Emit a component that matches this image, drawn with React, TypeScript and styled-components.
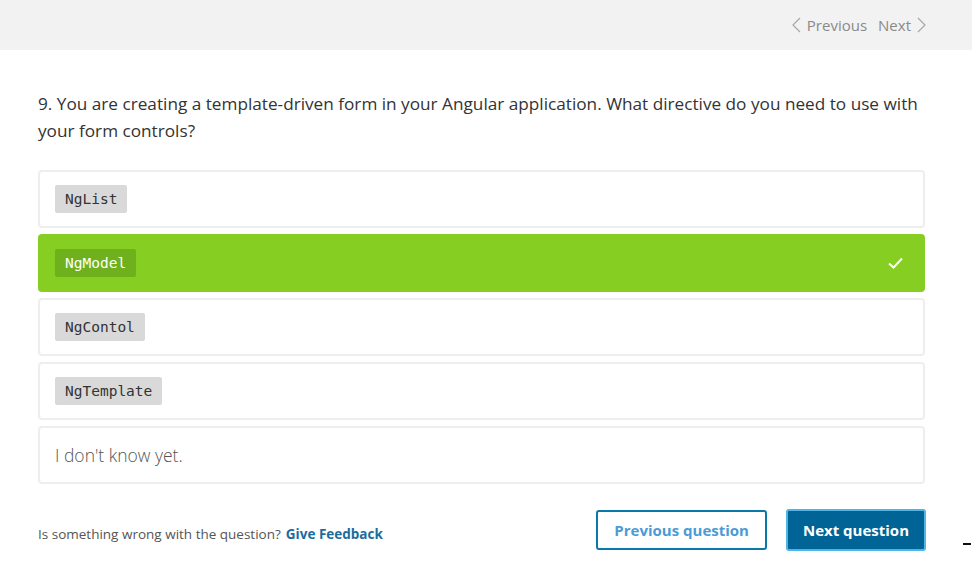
import React, { FC } from 'react';
import styled, { createGlobalStyle } from 'styled-components';

type OptionType = {
  id: number;
  label: string;
  code?: boolean;
  selected?: boolean;
};

const options: OptionType[] = [
  { id: 1, label: 'NgList', code: true },
  { id: 2, label: 'NgModel', code: true, selected: true },
  { id: 3, label: 'NgContol', code: true },
  { id: 4, label: 'NgTemplate', code: true },
  { id: 5, label: "I don't know yet." },
];

const GlobalStyle = createGlobalStyle`
  body {
    margin: 0;
    background: #ffffff;
    font-family: 'Open Sans', Lato, sans-serif;
  }
`;

const Page = styled.div`
  position: relative;
  width: 972px;
  height: 569px;
  overflow: hidden;
`;

const TopBar = styled.header`
  height: 50px;
  background: #f2f2f2;
  display: flex;
  align-items: center;
  justify-content: flex-end;
  padding-right: 46px;
  gap: 11px;
`;

const NavLink = styled.span`
  display: flex;
  align-items: center;
  gap: 6px;
  color: #8a8a8a;
  font-size: 15px;
  cursor: pointer;
  svg {
    display: block;
  }
`;

const Main = styled.main`
  padding: 40px 47px 0 38px;
`;

const Question = styled.p`
  margin: 0 0 26px;
  font-size: 17.2px;
  line-height: 27px;
  color: #333333;
`;

const OptionList = styled.ul`
  list-style: none;
  margin: 0;
  padding: 0;
  display: flex;
  flex-direction: column;
  gap: 6px;
`;

const OptionRow = styled.li<{ selected?: boolean }>`
  height: 58px;
  box-sizing: border-box;
  border: 2px solid ${(p) => (p.selected ? '#86ce22' : '#eeeeee')};
  border-radius: 4px;
  background: ${(p) => (p.selected ? '#86ce22' : '#ffffff')};
  display: flex;
  align-items: center;
  justify-content: space-between;
  padding: 0 20px 0 15px;
`;

const Code = styled.code<{ selected?: boolean }>`
  font-family: 'DejaVu Sans Mono', 'Liberation Mono', monospace;
  font-size: 14.5px;
  line-height: 28px;
  padding: 0 10px;
  border-radius: 2px;
  background: ${(p) => (p.selected ? '#6eb11d' : '#d9d9d9')};
  color: ${(p) => (p.selected ? '#ffffff' : '#333333')};
`;

const PlainText = styled.span`
  font-size: 17.5px;
  color: #555555;
  font-weight: 300;
`;

const Footer = styled.footer`
  display: flex;
  align-items: center;
  justify-content: space-between;
  margin-top: 25px;
`;

const Feedback = styled.p`
  margin: 8px 0 0;
  font-size: 13.5px;
  color: #555555;
  a {
    margin-left: 5px;
    color: #1a6c9e;
    font-weight: 700;
    text-decoration: none;
  }
`;

const Buttons = styled.div`
  display: flex;
  align-items: center;
  gap: 19px;
  margin-right: -1px;
`;

const Button = styled.button<{ primary?: boolean }>`
  height: ${(p) => (p.primary ? '42px' : '40px')};
  padding: 0 ${(p) => (p.primary ? '15px' : '16px')};
  box-sizing: border-box;
  border-radius: 3px;
  border: 2px solid ${(p) => (p.primary ? '#4fb4e6' : '#0b78ac')};
  background: ${(p) => (p.primary ? '#006496' : '#ffffff')};
  color: ${(p) => (p.primary ? '#ffffff' : '#4a9bd6')};
  font-family: 'Open Sans', Lato, sans-serif;
  font-weight: 700;
  font-size: 15px;
  cursor: pointer;
`;

const EdgeMark = styled.span`
  position: absolute;
  right: 1px;
  top: 543px;
  width: 8px;
  height: 2px;
  background: #111111;
`;

const Chevron: FC<{ dir: 'left' | 'right' }> = ({ dir }) => (
  <svg width="9" height="16" viewBox="0 0 9 16" fill="none" stroke="#a8a8a8" strokeWidth="1.2">
    {dir === 'left' ? <path d="M8 1 1 8l7 7" /> : <path d="M1 1l7 7-7 7" />}
  </svg>
);

const Check = () => (
  <svg width="15" height="12" viewBox="0 0 15 12" fill="none" stroke="#ffffff" strokeWidth="2">
    <path d="M1 6.5 5.5 10.5 14 1.5" />
  </svg>
);

const App: FC = () => (
  <Page>
    <GlobalStyle />
    <TopBar>
      <NavLink>
        <Chevron dir="left" />
        Previous
      </NavLink>
      <NavLink>
        Next
        <Chevron dir="right" />
      </NavLink>
    </TopBar>
    <Main>
      <Question>
        9. You are creating a template-driven form in your Angular application. What directive do you need to use with
        your form controls?
      </Question>
      <OptionList>
        {options.map((o) => (
          <OptionRow key={o.id} selected={o.selected}>
            {o.code ? <Code selected={o.selected}>{o.label}</Code> : <PlainText>{o.label}</PlainText>}
            {o.selected && <Check />}
          </OptionRow>
        ))}
      </OptionList>
      <Footer>
        <Feedback>
          Is something wrong with the question?<a href="#">Give Feedback</a>
        </Feedback>
        <Buttons>
          <Button>Previous question</Button>
          <Button primary>Next question</Button>
        </Buttons>
      </Footer>
    </Main>
    <EdgeMark />
  </Page>
);

export default App;
